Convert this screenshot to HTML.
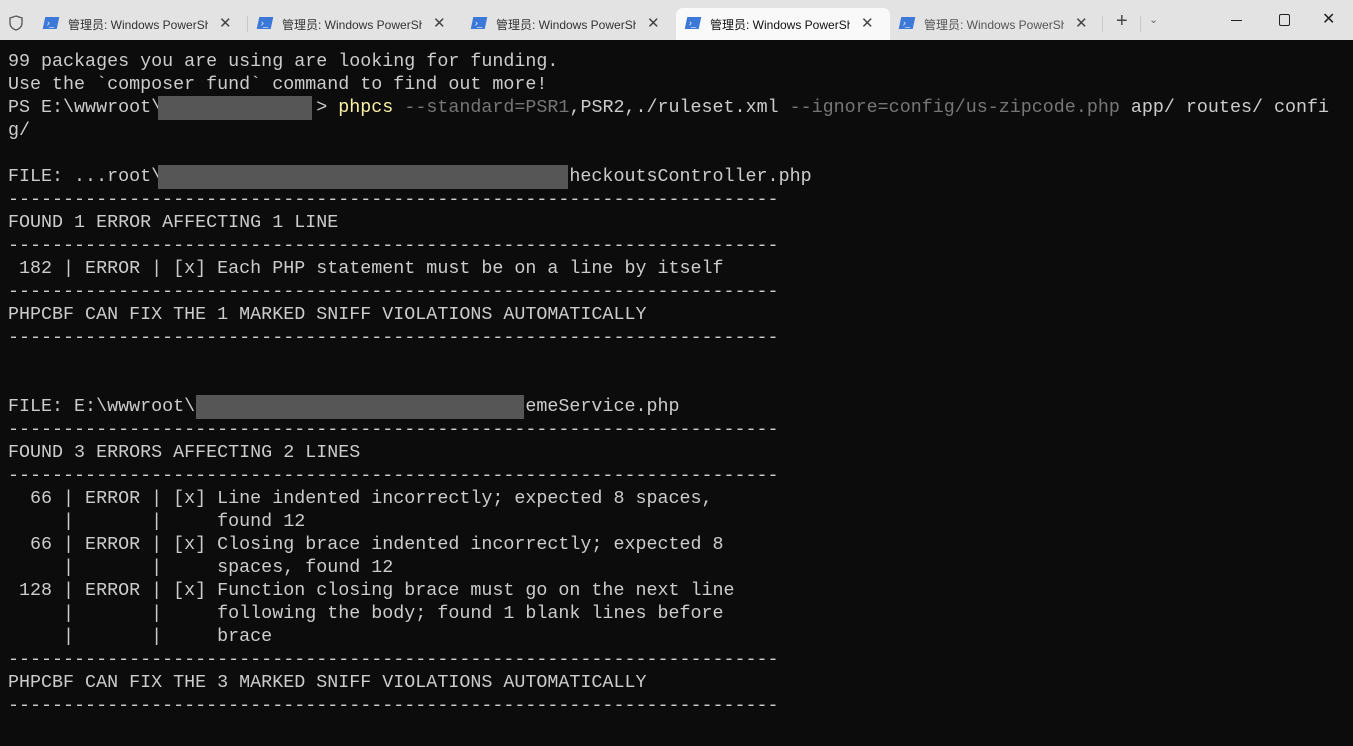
<!DOCTYPE html>
<html><head><meta charset="utf-8"><style>
body{margin:0;width:1353px;height:746px;overflow:hidden;background:#0c0c0c;font-family:"Liberation Sans","Noto Sans CJK SC",sans-serif}
#bar{position:absolute;left:0;top:0;width:1353px;height:40px;background:#e3e3e3}
.tab{position:absolute;top:8px;height:32px;font-size:12px;color:#333;white-space:nowrap}
.tab .ic{position:absolute;left:10px;top:9px;width:14px;height:12px;background:#3c78d8;transform:skewX(-12deg);color:#fff;font-size:9px;line-height:12px;text-indent:3px}
.tab .t{position:absolute;left:34px;top:8px;width:140px;overflow:hidden}
.tab .x{position:absolute;left:185px;top:6px;font-size:15px;color:#444}
.act{background:#f9f9f9;border-radius:7px 7px 0 0}
.sep{position:absolute;top:16px;width:1px;height:16px;background:#c8c8c8}
pre{position:absolute;left:8px;top:50px;margin:0;font-family:"Liberation Mono",monospace;font-size:18.35px;line-height:23px;color:#cccccc}
.y{color:#f9f1a5}.g{color:#767676}
.blur{position:absolute;background:#565656}
</style></head><body>
<div id="bar">
<svg style="position:absolute;left:9px;top:15px" width="14" height="16" viewBox="0 0 14 16"><path d="M7 1 L13 3 V8 C13 12 10 14 7 15 C4 14 1 12 1 8 V3 Z" fill="none" stroke="#555" stroke-width="1.3"/></svg>
<div class="tab" style="left:34px;width:212px"><div class="ic">›_</div><div class="t">管理员: Windows PowerShell</div><div class="x">✕</div></div>
<div class="sep" style="left:247px"></div>
<div class="tab" style="left:248px;width:212px"><div class="ic">›_</div><div class="t">管理员: Windows PowerShell</div><div class="x">✕</div></div>
<div class="tab" style="left:462px;width:212px"><div class="ic">›_</div><div class="t">管理员: Windows PowerShell</div><div class="x">✕</div></div>
<div class="tab act" style="left:676px;width:214px"><div class="ic">›_</div><div class="t" style="color:#111">管理员: Windows PowerShell</div><div class="x">✕</div></div>
<div class="tab" style="left:890px;width:212px"><div class="ic">›_</div><div class="t" style="color:#555">管理员: Windows PowerShell</div><div class="x">✕</div></div>
<div class="sep" style="left:1102px"></div>
<div style="position:absolute;left:1116px;top:10px;font-size:20px;color:#444">+</div>
<div class="sep" style="left:1140px"></div>
<div style="position:absolute;left:1149px;top:13px;font-size:11px;color:#666">⌄</div>
<div style="position:absolute;left:1231px;top:20px;width:11px;height:1px;background:#222"></div>
<div style="position:absolute;left:1279px;top:14px;width:9px;height:10px;border:1px solid #222;border-radius:2px"></div>
<div style="position:absolute;left:1322px;top:9px;font-size:16px;color:#222">✕</div>
</div>
<pre>99 packages you are using are looking for funding.
Use the `composer fund` command to find out more!
PS E:\wwwroot\              > <span class="y">phpcs</span> <span class="g">--standard=PSR1</span>,PSR2,./ruleset.xml <span class="g">--ignore=config/us-zipcode.php</span> app/ routes/ confi
g/

FILE: ...root\                                     heckoutsController.php
----------------------------------------------------------------------
FOUND 1 ERROR AFFECTING 1 LINE
----------------------------------------------------------------------
 182 | ERROR | [x] Each PHP statement must be on a line by itself
----------------------------------------------------------------------
PHPCBF CAN FIX THE 1 MARKED SNIFF VIOLATIONS AUTOMATICALLY
----------------------------------------------------------------------


FILE: E:\wwwroot\                              emeService.php
----------------------------------------------------------------------
FOUND 3 ERRORS AFFECTING 2 LINES
----------------------------------------------------------------------
  66 | ERROR | [x] Line indented incorrectly; expected 8 spaces,
     |       |     found 12
  66 | ERROR | [x] Closing brace indented incorrectly; expected 8
     |       |     spaces, found 12
 128 | ERROR | [x] Function closing brace must go on the next line
     |       |     following the body; found 1 blank lines before
     |       |     brace
----------------------------------------------------------------------
PHPCBF CAN FIX THE 3 MARKED SNIFF VIOLATIONS AUTOMATICALLY
----------------------------------------------------------------------
</pre>
<div class="blur" style="left:158px;top:96px;width:154px;height:24px"></div>
<div class="blur" style="left:158px;top:165px;width:410px;height:24px"></div>
<div class="blur" style="left:196px;top:395px;width:328px;height:24px"></div>
</body></html>
